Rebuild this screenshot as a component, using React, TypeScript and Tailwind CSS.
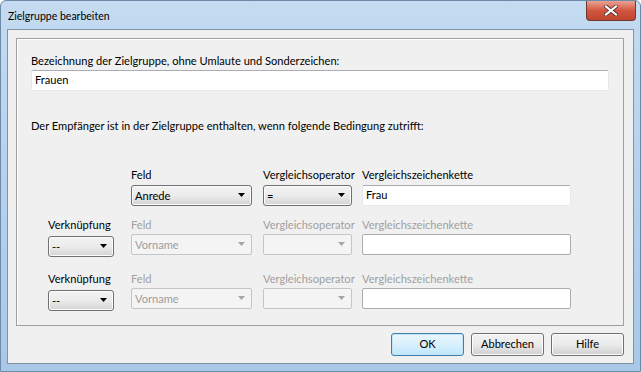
import type { ReactNode } from 'react';

const font = { fontFamily: 'Lato, "Liberation Sans", sans-serif' };

function Arrow({ disabled }: { disabled?: boolean }) {
  return (
    <svg width="8" height="5" viewBox="0 0 8 5" className="shrink-0">
      <path d="M0 0 H7 L3.5 4 Z" fill={disabled ? '#a6a6a6' : '#000'} />
    </svg>
  );
}

function Combo({ value, width, disabled, className = '' }: { value: string; width: string; disabled?: boolean; className?: string }) {
  if (disabled) {
    return (
      <div className={`${width} h-[21px] flex items-center justify-between pl-[3px] pr-[5px] rounded-[2px] border border-[#c2c6ca] bg-[#f4f4f4] text-[#9d9d9d] ${className}`}>
        <span className="leading-none">{value}</span>
        <Arrow disabled />
      </div>
    );
  }
  return (
    <div className={`${width} h-[21px] flex items-center justify-between pl-[3px] pr-[5px] rounded-[3px] border border-[#707070] bg-gradient-to-b from-[#f3f3f3] via-[#ebebeb] to-[#d4d4d4] shadow-[inset_0_0_0_1px_#fbfbfb] text-black ${className}`}>
      <span className="leading-none">{value}</span>
      <Arrow />
    </div>
  );
}

function TextBox({ value, width, disabled }: { value?: string; width: string; disabled?: boolean }) {
  return (
    <div className={`${width} h-[21px] flex items-center px-[3px] rounded-[2px] border ${disabled ? 'border-[#abadb3]' : 'border-[#e3e9ef] border-t-[#abadb3]'} bg-white`}>
      {value}
    </div>
  );
}

function Cell({ label, disabled, children, w }: { label?: string; disabled?: boolean; children?: ReactNode; w: string }) {
  return (
    <div className={`${w} flex flex-col`}>
      <div className={`h-[16px] leading-[16px] whitespace-nowrap ${disabled ? 'text-[#a0a0a0]' : 'text-black'}`}>{label}</div>
      {children}
    </div>
  );
}

function Button({ label, primary }: { label: string; primary?: boolean }) {
  return (
    <div
      className={`w-[73px] h-[23px] flex items-center justify-center rounded-[3px] border ${
        primary
          ? 'border-[#3c7fb1] bg-gradient-to-b from-[#eaf6fd] via-[#d9f0fc] to-[#bee6fd] shadow-[inset_0_0_0_1px_#c4e5f6]'
          : 'border-[#707070] bg-gradient-to-b from-[#f2f2f2] via-[#ebebeb] to-[#cfcfcf] shadow-[inset_0_0_0_1px_#fcfcfc]'
      }`}
    >
      {label}
    </div>
  );
}

function ConditionRow({ first, className }: { first?: boolean; className: string }) {
  return (
    <div className={`flex ${className}`}>
      <Cell w="w-[66px]" label={first ? undefined : 'Verknüpfung'}>
        {!first && <Combo value="--" width="w-[66px]" className="mt-[3px]" />}
      </Cell>
      <div className="w-[17px]" />
      <Cell w="w-[121px]" label="Feld" disabled={!first}>
        <Combo value={first ? 'Anrede' : 'Vorname'} width="w-[121px]" disabled={!first} className={first ? 'mt-[2px]' : 'mt-[1px]'} />
      </Cell>
      <div className="w-[11px]" />
      <Cell w="w-[89px]" label="Vergleichsoperator" disabled={!first}>
        <Combo value={first ? '=' : ''} width="w-[89px]" disabled={!first} className={first ? 'mt-[2px]' : 'mt-[1px]'} />
      </Cell>
      <div className="w-[10px]" />
      <Cell w="w-[209px]" label="Vergleichszeichenkette" disabled={!first}>
        <div className={first ? 'mt-[2px]' : 'mt-[1px]'}>
          <TextBox value={first ? 'Frau' : undefined} width="w-[209px]" disabled={!first} />
        </div>
      </Cell>
    </div>
  );
}

export default function App() {
  return (
    <div
      className="w-[641px] h-[372px] flex flex-col text-[11.1px] text-black overflow-hidden rounded-t-[6px] border border-[#6c8aa8] bg-gradient-to-b from-[#c4dbf1] via-[#b5d1ee] to-[#a9c8e8]"
      style={font}
    >
      <div className="h-[28px] flex items-start justify-between pl-[7px]">
        <div className="mt-[7px] leading-[16px] text-[10.5px]">Zielgruppe bearbeiten</div>
        <div className="mr-[4px] w-[50px] h-[20px] flex items-center justify-center rounded-b-[4px] border border-t-0 border-[#6e3a34] bg-gradient-to-b from-[#e8a292] via-[#d2563f] to-[#c0452e]">
          <svg width="14" height="11" viewBox="0 0 14 11">
            <path d="M2 1.5 L12 9.5 M12 1.5 L2 9.5" stroke="#4a2a26" strokeWidth="3.6" strokeLinecap="square" />
            <path d="M2 1.5 L12 9.5 M12 1.5 L2 9.5" stroke="#ffffff" strokeWidth="2.2" strokeLinecap="square" />
          </svg>
        </div>
      </div>
      <div className="mx-[6px] h-[335px] border border-[#8293a6] bg-[#f0f0f0] flex flex-col">
        <div className="mt-[8px] ml-[8px] mr-[9px] h-[288px] border border-[#a0a0a0] shadow-[inset_1px_1px_0_#ffffff] flex flex-col pl-[14px]">
          <div className="mt-[14px] leading-[16px]">Bezeichnung der Zielgruppe, ohne Umlaute und Sonderzeichen:</div>
          <div className="mt-[1px]">
            <TextBox value="Frauen" width="w-[578px]" />
          </div>
          <div className="mt-[27px] leading-[16px]">Der Empfänger ist in der Zielgruppe enthalten, wenn folgende Bedingung zutrifft:</div>
          <div className="pl-[17px] flex flex-col">
            <ConditionRow first className="mt-[33px]" />
            <ConditionRow className="mt-[11px]" />
            <ConditionRow className="mt-[14px]" />
          </div>
        </div>
        <div className="mt-[7px] mr-[9px] flex justify-end gap-[7px]">
          <Button label="OK" primary />
          <Button label="Abbrechen" />
          <Button label="Hilfe" />
        </div>
      </div>
    </div>
  );
}
